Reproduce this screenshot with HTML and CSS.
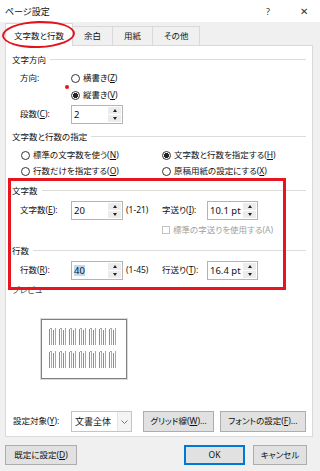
FILE: index.html
```html
<!DOCTYPE html>
<html lang="ja">
<head>
    <meta charset="UTF-8">
    <title>ページ設定</title>
    <link rel="stylesheet" href="styles.css">
</head>
<body>
    <div class="dialog">
        <div class="titlebar">
            <span class="title">ページ設定</span>
            <span class="help">?</span>
            <span class="close">✕</span>
        </div>

        <div class="tabs">
            <div class="tab active">文字数と行数</div>
            <div class="tab">余白</div>
            <div class="tab">用紙</div>
            <div class="tab">その他</div>
        </div>

        <div class="panel">
            <div class="group-title">文字方向</div>
            <div class="row dir-row">
                <span class="label">方向:</span>
                <div class="radio-col">
                    <div class="radio"><span class="circle"></span><span>横書き(<u>Z</u>)</span></div>
                    <div class="radio"><span class="circle checked"></span><span>縦書き(<u>V</u>)</span></div>
                </div>
            </div>
            <div class="row cols-row">
                <span class="label">段数(<u>C</u>):</span>
                <div class="spin">
                    <span class="val">2</span>
                    <span class="arrows"><i class="up"></i><i class="down"></i></span>
                </div>
            </div>

            <div class="group-title spec-title">文字数と行数の指定</div>
            <div class="radio-grid">
                <div class="radio"><span class="circle"></span><span>標準の文字数を使う(<u>N</u>)</span></div>
                <div class="radio"><span class="circle checked"></span><span>文字数と行数を指定する(<u>H</u>)</span></div>
                <div class="radio"><span class="circle"></span><span>行数だけを指定する(<u>O</u>)</span></div>
                <div class="radio"><span class="circle"></span><span>原稿用紙の設定にする(<u>X</u>)</span></div>
            </div>

            <div class="group-title chars-title">文字数</div>
            <div class="row field-row">
                <div class="pair">
                    <span class="label">文字数(<u>E</u>):</span>
                    <div class="spin">
                        <span class="val">20</span>
                        <span class="arrows"><i class="up"></i><i class="down"></i></span>
                    </div>
                    <span class="range">(1-21)</span>
                </div>
                <span class="label short">字送り(<u>I</u>):</span>
                <div class="spin narrow">
                    <span class="val">10.1 pt</span>
                    <span class="arrows"><i class="up"></i><i class="down"></i></span>
                </div>
            </div>
            <div class="check-row">
                <span class="box"></span><span>標準の字送りを使用する(A)</span>
            </div>

            <div class="group-title lines-title">行数</div>
            <div class="row field-row">
                <div class="pair">
                    <span class="label">行数(<u>R</u>):</span>
                    <div class="spin">
                        <span class="val"><span class="selected">40</span></span>
                        <span class="arrows"><i class="up"></i><i class="down"></i></span>
                    </div>
                    <span class="range">(1-45)</span>
                </div>
                <span class="label short">行送り(<u>T</u>):</span>
                <div class="spin narrow">
                    <span class="val">16.4 pt</span>
                    <span class="arrows"><i class="up"></i><i class="down"></i></span>
                </div>
            </div>

            <div class="preview-title">プレビュー</div>
            <div class="preview">
                <svg width="70" height="44" viewBox="0 0 70 44">
                    <defs>
                        <g id="col">
                            <rect x="0" y="1" width="1" height="16" fill="#8e8e8e"/>
                            <rect x="2" y="0" width="1" height="17" fill="#a8a8a8"/>
                            <rect x="1" y="0" width="2" height="1" fill="#a8a8a8"/>
                            <rect x="4" y="2" width="1" height="15" fill="#8e8e8e"/>
                            <rect x="6" y="0" width="1" height="17" fill="#a8a8a8"/>
                        </g>
                    </defs>
                    <use href="#col" x="0" y="0"/>
                    <use href="#col" x="10" y="0"/>
                    <use href="#col" x="20" y="0"/>
                    <use href="#col" x="30" y="0"/>
                    <use href="#col" x="40" y="0"/>
                    <use href="#col" x="50" y="0"/>
                    <use href="#col" x="60" y="0"/>
                    <use href="#col" x="0" y="23"/>
                    <use href="#col" x="10" y="23"/>
                    <use href="#col" x="20" y="23"/>
                    <use href="#col" x="30" y="23"/>
                    <use href="#col" x="40" y="23"/>
                    <use href="#col" x="50" y="23"/>
                    <use href="#col" x="60" y="23"/>
                </svg>
            </div>

            <div class="row target-row">
                <span class="label target-label">設定対象(<u>Y</u>):</span>
                <div class="select">
                    <span class="val">文書全体</span>
                    <span class="drop">
                        <svg width="7" height="4" viewBox="0 0 7 4"><path d="M0.5 0.5 L3.5 3.5 L6.5 0.5" fill="none" stroke="#777" stroke-width="1"/></svg>
                    </span>
                </div>
                <button class="btn grid-btn">グリッド線(<u>W</u>)...</button>
                <button class="btn font-btn">フォントの設定(<u>F</u>)...</button>
            </div>
        </div>

        <div class="footer">
            <button class="btn default-btn">既定に設定(<u>D</u>)</button>
            <button class="btn ok-btn">OK</button>
            <button class="btn cancel-btn">キャンセル</button>
        </div>

        <div class="mark-ellipse"></div>
        <div class="mark-dot"></div>
        <div class="mark-rect"></div>
    </div>
</body>
</html>
```

FILE: styles.css
```css
body {
    margin: 0;
    background: #f0f0f0;
    font-family: "Noto Sans", "Noto Sans CJK JP", sans-serif;
    font-size: 8.5px;
    font-feature-settings: "palt";
    color: #111;
    line-height: 1;
}

.dialog {
    position: relative;
    width: 320px;
    height: 471px;
    overflow: hidden;
}

u {
    text-decoration: underline;
    text-underline-offset: 1px;
}

/* title bar */
.titlebar {
    height: 22px;
    background: #fff;
    display: flex;
    align-items: center;
    padding-left: 5px;
    font-size: 9px;
}

.title {
    flex: 1;
}

.help {
    width: 10px;
    text-align: center;
    margin-right: 25px;
    color: #333;
}

.close {
    width: 12px;
    text-align: center;
    margin-right: 10px;
    font-size: 10px;
    color: #333;
}

/* tabs */
.tabs {
    display: flex;
    align-items: flex-end;
    height: 23px;
    padding-left: 5px;
}

.tab {
    height: 19px;
    padding: 0 11px;
    display: flex;
    align-items: center;
    border: 1px solid #d9d9d9;
    border-bottom: none;
    margin-right: -1px;
    background: #f0f0f0;
    box-sizing: border-box;
}

.tab.active {
    height: 23px;
    margin-bottom: -1px;
    background: #fff;
    position: relative;
    z-index: 1;
    padding: 2px 8px 0 8px;
}

/* panel */
.panel {
    width: 308px;
    height: 392px;
    margin-left: 5px;
    background: #fff;
    border: 1px solid #d9d9d9;
    box-sizing: border-box;
    padding: 8px 6px 0 6px;
}

.group-title {
    display: flex;
    align-items: center;
    height: 12px;
    gap: 4px;
}

.group-title::after {
    content: "";
    flex: 1;
    border-top: 1px solid #dcdcdc;
    margin-top: -1px;
}

.row {
    display: flex;
    align-items: center;
}

.label {
    width: 51px;
    margin-left: 8px;
    flex-shrink: 0;
}

.label.short {
    width: 45px;
    margin-left: 0;
}

.dir-row {
    align-items: flex-start;
    margin-top: 4px;
}

.dir-row .label {
    margin-top: 4px;
}

.radio-col {
    display: flex;
    flex-direction: column;
}

.radio {
    display: flex;
    align-items: center;
    gap: 3px;
    height: 17px;
}

.circle {
    width: 9px;
    height: 9px;
    border: 1px solid #333;
    border-radius: 50%;
    box-sizing: border-box;
    background: #fff;
}

.circle.checked {
    background: radial-gradient(circle, #222 0 2.3px, #fff 2.8px);
}

.cols-row {
    margin-top: 1px;
}

/* spin boxes */
.spin {
    display: flex;
    width: 52px;
    height: 19px;
    border: 1px solid #b4b4b4;
    box-sizing: border-box;
    background: #fff;
    flex-shrink: 0;
}

.spin.narrow {
    width: 51px;
}

.spin .val {
    flex: 1;
    display: flex;
    align-items: center;
    padding-left: 2px;
    font-size: 9.5px;
}

.selected {
    background: #bcdcf4;
    padding: 1px 0;
}

.arrows {
    width: 13px;
    display: flex;
    flex-direction: column;
    gap: 1px;
    padding: 1px;
    background: #fff;
}

.arrows i {
    flex: 1;
    display: flex;
    align-items: center;
    justify-content: center;
    background: #ececec;
}

.arrows i::before {
    content: "";
    border-left: 2.5px solid transparent;
    border-right: 2.5px solid transparent;
}

.arrows .up::before {
    border-bottom: 3px solid #222;
}

.arrows .down::before {
    border-top: 3px solid #222;
}

.range {
    margin-left: 3px;
}

.spec-title {
    margin-top: 7px;
}

.radio-grid {
    display: grid;
    grid-template-columns: 141px 1fr;
    margin-left: 9px;
    margin-top: 4px;
}

.radio-grid .radio {
    height: 16px;
}

.chars-title {
    margin-top: 6px;
}

.field-row {
    margin-top: 4px;
}

.pair {
    display: flex;
    align-items: center;
    width: 150px;
}

.check-row {
    display: flex;
    align-items: center;
    gap: 3px;
    height: 14px;
    margin: 3px 0 0 150px;
    color: #a0a0a0;
}

.box {
    width: 8px;
    height: 8px;
    border: 1px solid #c4c4c4;
    box-sizing: border-box;
}

.lines-title {
    margin-top: 8px;
}

.preview-title {
    margin-top: 4px;
    height: 12px;
    display: flex;
    align-items: center;
    color: #444;
}

.preview {
    width: 86px;
    height: 60px;
    margin: 23px 0 0 29px;
    border: 1px solid #808080;
    box-shadow: 0 0 0 1px #dadada;
    box-sizing: border-box;
    display: flex;
    justify-content: center;
    padding-top: 8px;
}

/* bottom controls */
.target-row {
    margin-top: 32px;
}

.target-label {
    margin-left: 1px;
    width: 58px;
}

.select {
    display: flex;
    width: 62px;
    height: 21px;
    border: 1px solid #c4c4c4;
    box-sizing: border-box;
    background: #fff;
}

.select .val {
    flex: 1;
    display: flex;
    align-items: center;
    padding-left: 3px;
    font-size: 9px;
}

.drop {
    width: 13px;
    display: flex;
    align-items: center;
    justify-content: center;
    border-left: 1px solid #e4e4e4;
    background: #f4f4f4;
}

.btn {
    font-family: inherit;
    font-size: 8.5px;
    font-feature-settings: "palt";
    color: #111;
    height: 21px;
    padding: 0;
    background: #e1e1e1;
    border: 1px solid #adadad;
    box-sizing: border-box;
    line-height: 1;
}

.grid-btn {
    width: 71px;
    margin-left: 11px;
}

.font-btn {
    width: 87px;
    margin-left: 6px;
}

.footer {
    display: flex;
    align-items: center;
    margin-top: 8px;
    padding: 0 13px 0 5px;
}

.default-btn {
    width: 72px;
    height: 20px;
}

.ok-btn {
    width: 61px;
    height: 20px;
    margin-left: auto;
    border: 1px solid #0078d7;
    box-shadow: inset 0 0 0 1px #0078d7;
}

.cancel-btn {
    width: 54px;
    height: 20px;
    margin-left: 8px;
}

/* red annotation marks drawn over the dialog */
.mark-ellipse {
    position: absolute;
    left: 2px;
    top: 21px;
    width: 73px;
    height: 27px;
    border: 2px solid #e3141e;
    border-radius: 50%;
    box-sizing: border-box;
    transform: rotate(-2deg);
    z-index: 2;
}

.mark-dot {
    position: absolute;
    left: 65px;
    top: 85px;
    width: 4px;
    height: 4px;
    border-radius: 50%;
    background: #ee1111;
}

.mark-rect {
    position: absolute;
    left: 8px;
    top: 178px;
    width: 278px;
    height: 112px;
    border: 3px solid #e8141f;
    box-sizing: border-box;
}
```
